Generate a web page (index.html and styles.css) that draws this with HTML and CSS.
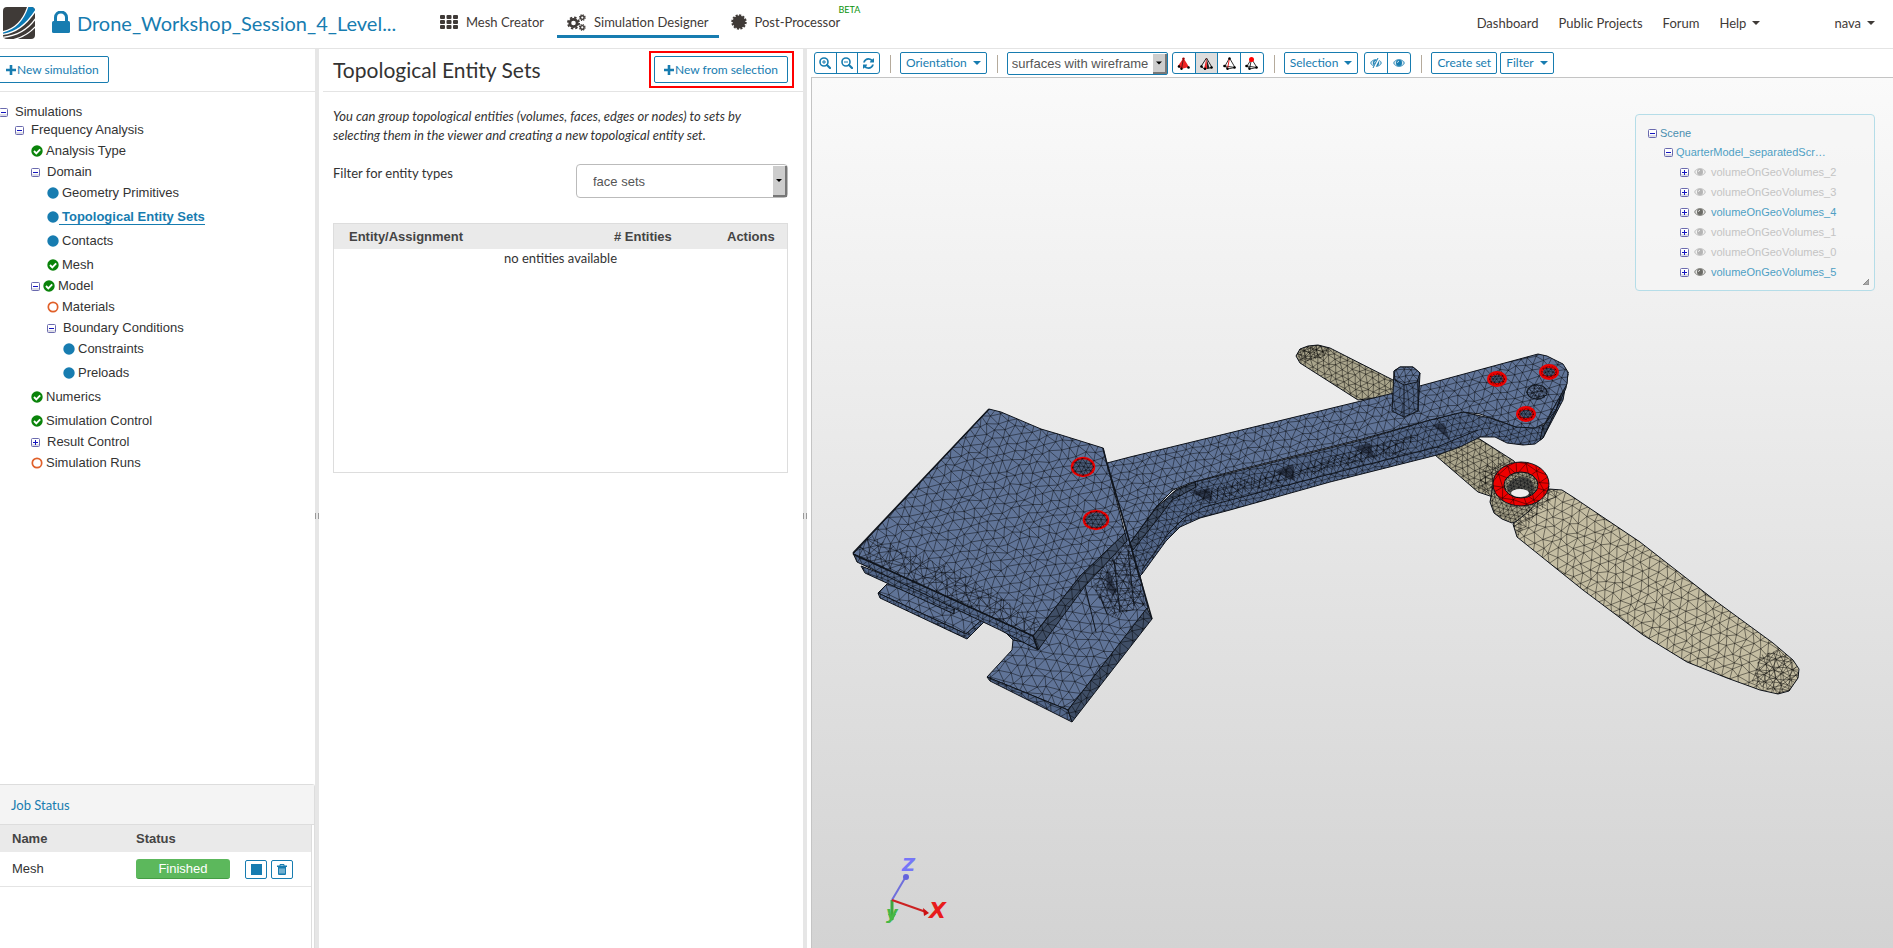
FILE: index.html
```html
<!DOCTYPE html>
<html lang="en">
<head>
<meta charset="utf-8">
<title>Simulation Designer</title>
<link rel="stylesheet" href="styles.css">
</head>
<body>
<svg class="sprite" aria-hidden="true">
  <symbol id="i-minus" viewBox="0 0 9 9"><rect x="0.5" y="0.5" width="8" height="8" rx="1" fill="#fff" stroke="#6a6aae"/><path d="M1 6h7v2H1z" fill="#dcdce6"/><path d="M2 4.500h5" stroke="#1515c0"/></symbol>
  <symbol id="i-plus" viewBox="0 0 9 9"><rect x="0.500" y="0.500" width="8" height="8" rx="1" fill="#fff" stroke="#6a6aae"/><path d="M1 6h7v2H1z" fill="#dcdce6"/><path d="M2 4.500h5M4.500 2v5" stroke="#1515c0"/></symbol>
  <symbol id="i-dot" viewBox="0 0 12 12"><circle cx="6" cy="6" r="5.700" fill="#177cb0"/></symbol>
  <symbol id="i-ok" viewBox="0 0 12 12"><circle cx="6" cy="6" r="5.700" fill="#0a830a"/><path d="M3 6l2.300 2.300L9.200 4.400" fill="none" stroke="#fff" stroke-width="1.900"/></symbol>
  <symbol id="i-open" viewBox="0 0 12 12"><circle cx="6" cy="6" r="4.700" fill="none" stroke="#e0602a" stroke-width="1.700"/></symbol>
  <symbol id="i-add" viewBox="0 0 10 10"><path d="M3.700 0h2.600v3.700H10v2.600H6.300V10H3.700V6.300H0V3.700h3.700z" fill="currentColor"/></symbol>
  <symbol id="i-caret" viewBox="0 0 8 4"><path d="M0 0h8L4 4z" fill="currentColor"/></symbol>
  <symbol id="i-eye" viewBox="0 0 12 8"><path d="M0 4Q2.500 0 6 0t6 4Q9.500 8 6 8T0 4z" fill="currentColor" opacity=".75"/><path d="M1.300 4Q2 2.300 3.500 1.500 2.300 4 3.500 6.500 2 5.700 1.300 4zM10.700 4Q10 2.300 8.500 1.500 9.700 4 8.500 6.500 10 5.700 10.700 4z" fill="#fff" opacity=".8"/><circle cx="6" cy="3.900" r="2.800" fill="currentColor"/><path d="M4.500 3.800Q4.600 2.300 6 2.200" fill="none" stroke="#fff" stroke-width=".8"/></symbol>
  <symbol id="i-zoomin" viewBox="0 0 12 12"><circle cx="5" cy="5" r="4" fill="none" stroke="currentColor" stroke-width="1.600"/><path d="M8 8l3 3" stroke="currentColor" stroke-width="2.200" stroke-linecap="round"/><path d="M3 5h4M5 3v4" stroke="currentColor"/></symbol>
  <symbol id="i-zoomout" viewBox="0 0 12 12"><circle cx="5" cy="5" r="4" fill="none" stroke="currentColor" stroke-width="1.600"/><path d="M8 8l3 3" stroke="currentColor" stroke-width="2.200" stroke-linecap="round"/><path d="M3 5h4" stroke="currentColor"/></symbol>
  <symbol id="i-refresh" viewBox="0 0 1536 1536"><path fill="currentColor" d="M1511 928q0 5-1 7-64 268-268 434.500t-478 166.500q-146 0-282.500-55t-243.500-157l-129 129q-19 19-45 19t-45-19-19-45v-448q0-26 19-45t45-19h448q26 0 45 19t19 45-19 45l-137 137q71 66 161 102t187 36q134 0 250-65t186-179q11-17 53-117 8-23 30-23h192q13 0 22.500 9.500t9.500 22.500zm25-800v448q0 26-19 45t-45 19h-448q-26 0-45-19t-19-45 19-45l138-138q-148-137-349-137-134 0-250 65t-186 179q-11 17-53 117-8 23-30 23h-199q-13 0-22.500-9.500t-9.500-22.500v-7q65-268 270-434.500t480-166.500q146 0 284 55.500t245 156.500l130-129q19-19 45-19t45 19 19 45z"/></symbol>
</svg>

<header class="topbar">
  <a class="logo" href="#" aria-label="Home">
    <svg width="32" height="32" viewBox="0 0 32 32"><defs><clipPath id="lg"><rect width="32" height="32" rx="4"/></clipPath></defs>
      <g clip-path="url(#lg)"><rect width="32" height="32" fill="#3f3a37"/>
      <path d="M0 25C13 22 20 13 25 0h7v5C25 15 15 25 0 27z" fill="#0a7ab5"/>
      <g fill="none" stroke="#fff"><path d="M-1 25C13 22 21 12 25-1" stroke-width="1.300"/><path d="M-1 27.500C14 26 24 17 33 3" stroke-width="1.300"/><path d="M-1 30.500C14 29 25 23 33 11" stroke-width="1.300"/><path d="M9 33C18 31 26 27 33 19" stroke-width="1.300"/></g></g></svg>
  </a>
  <a class="project" href="#">
    <svg width="18" height="22" viewBox="0 0 18 22"><path d="M3.500 11V6.500a5.500 5.500 0 0 1 11 0V11" fill="none" stroke="currentColor" stroke-width="3"/><rect y="10" width="18" height="12" rx="1.500" fill="currentColor"/></svg>
    <span>Drone_Workshop_Session_4_Level...</span>
  </a>
  <nav class="tabs" aria-label="Workbench">
    <a class="tab" href="#"><svg width="18" height="14" viewBox="0 0 18 14" fill="currentColor"><rect width="5" height="4" rx="1"/><rect x="6.500" width="5" height="4" rx="1"/><rect x="13" width="5" height="4" rx="1"/><rect y="5" width="5" height="4" rx="1"/><rect x="6.500" y="5" width="5" height="4" rx="1"/><rect x="13" y="5" width="5" height="4" rx="1"/><rect y="10" width="5" height="4" rx="1"/><rect x="6.500" y="10" width="5" height="4" rx="1"/><rect x="13" y="10" width="5" height="4" rx="1"/></svg>Mesh Creator</a>
    <a class="tab active" href="#"><svg width="19" height="17" viewBox="0 0 19 17" fill="none" stroke="currentColor"><circle cx="6.500" cy="9" r="3.700" stroke-width="2.800"/><circle cx="6.500" cy="9" r="5.600" stroke-width="1.800" stroke-dasharray="2.400 2"/><circle cx="15.300" cy="3.600" r="1.800" stroke-width="1.400"/><circle cx="15.300" cy="3.600" r="2.800" stroke-width="1.200" stroke-dasharray="1.200 1"/><circle cx="15.300" cy="13.400" r="1.800" stroke-width="1.400"/><circle cx="15.300" cy="13.400" r="2.800" stroke-width="1.200" stroke-dasharray="1.200 1"/></svg>Simulation Designer</a>
    <a class="tab" href="#"><svg width="16" height="16" viewBox="0 0 16 16"><circle cx="8" cy="8" r="6.400" fill="currentColor"/><circle cx="8" cy="8" r="6.700" fill="none" stroke="currentColor" stroke-width="2" stroke-dasharray="2.100 1.400"/></svg>Post-Processor<sup class="beta">BETA</sup></a>
  </nav>
  <nav class="links" aria-label="Site">
    <a href="#">Dashboard</a><a href="#">Public Projects</a><a href="#">Forum</a>
    <a href="#">Help<svg class="caret"><use href="#i-caret"/></svg></a>
    <a class="user" href="#">nava<svg class="caret"><use href="#i-caret"/></svg></a>
  </nav>
</header>

<main class="workbench">
  <aside class="side">
    <div class="panel-head"><button class="btn btn-first"><svg class="add"><use href="#i-add"/></svg>New simulation</button></div>
    <ul class="tree">
      <li><div class="node"><svg class="fold"><use href="#i-minus"/></svg>Simulations</div>
        <ul>
          <li><div class="node"><svg class="fold"><use href="#i-minus"/></svg>Frequency Analysis</div>
            <ul>
              <li><div class="leaf"><svg><use href="#i-ok"/></svg>Analysis Type</div></li>
              <li><div class="node"><svg class="fold"><use href="#i-minus"/></svg>Domain</div>
                <ul>
                  <li><div class="leaf"><svg><use href="#i-dot"/></svg>Geometry Primitives</div></li>
                  <li><div class="leaf"><svg><use href="#i-dot"/></svg><a class="current" href="#">Topological Entity Sets</a></div></li>
                  <li><div class="leaf"><svg><use href="#i-dot"/></svg>Contacts</div></li>
                  <li><div class="leaf"><svg><use href="#i-ok"/></svg>Mesh</div></li>
                </ul></li>
              <li><div class="node both"><svg class="fold"><use href="#i-minus"/></svg><svg><use href="#i-ok"/></svg>Model</div>
                <ul>
                  <li><div class="leaf"><svg><use href="#i-open"/></svg>Materials</div></li>
                  <li><div class="node"><svg class="fold"><use href="#i-minus"/></svg>Boundary Conditions</div>
                    <ul>
                      <li><div class="leaf"><svg><use href="#i-dot"/></svg>Constraints</div></li>
                      <li><div class="leaf"><svg><use href="#i-dot"/></svg>Preloads</div></li>
                    </ul></li>
                </ul></li>
              <li><div class="leaf"><svg><use href="#i-ok"/></svg>Numerics</div></li>
              <li><div class="leaf"><svg><use href="#i-ok"/></svg>Simulation Control</div></li>
              <li><div class="node"><svg class="fold"><use href="#i-plus"/></svg>Result Control</div></li>
              <li><div class="leaf"><svg><use href="#i-open"/></svg>Simulation Runs</div></li>
            </ul></li>
        </ul></li>
    </ul>
    <section class="jobs">
      <h2>Job Status</h2>
      <div class="jobs-body">
      <table>
        <thead><tr><th class="c-name">Name</th><th>Status</th><th class="c-act"></th></tr></thead>
        <tbody><tr><td>Mesh</td><td><span class="badge">Finished</span></td>
          <td><div class="acts"><button class="mini" aria-label="Stop"><svg width="11" height="11"><rect width="11" height="11" fill="#177cb0"/></svg></button><button class="mini" aria-label="Delete"><svg width="10" height="11" viewBox="0 0 10 11"><path d="M3 2V.5h4V2" fill="none" stroke="#177cb0"/><path d="M0 1.500h10V3H0zM1 3h8v7q0 1-1 1H2q-1 0-1-1z" fill="#177cb0"/><path d="M3 4.500v5M5 4.500v5M7 4.500v5" stroke="#cfe4ef"/></svg></button></div></td></tr></tbody>
      </table>
      </div>
    </section>
  </aside>
  <div class="splitter"><i></i></div>

  <section class="entity">
    <div class="panel-head entity-head"><h1>Topological Entity Sets</h1><div class="highlight"><button class="btn"><svg class="add"><use href="#i-add"/></svg>New from selection</button></div></div>
    <div class="entity-body">
      <p class="hint">You can group topological entities (volumes, faces, edges or nodes) to sets by selecting them in the viewer and creating a new topological entity set.</p>
      <div class="filter"><label for="etype">Filter for entity types</label>
        <span class="pick"><select id="etype"><option>face sets</option></select><svg class="caret"><use href="#i-caret"/></svg></span></div>
      <div class="table-box"><table>
        <thead><tr><th>Entity/Assignment</th><th class="c-num"># Entities</th><th class="c-do">Actions</th></tr></thead>
        <tbody><tr><td colspan="3">no entities available</td></tr></tbody>
      </table></div>
    </div>
  </section>
  <div class="splitter"><i></i></div>

  <section class="viewer">
    <div class="toolbar">
      <div class="group g-zoom"><button aria-label="Zoom in"><svg width="12" height="12"><use href="#i-zoomin"/></svg></button><button aria-label="Zoom out"><svg width="12" height="12"><use href="#i-zoomout"/></svg></button><button aria-label="Reset view"><svg width="11" height="11"><use href="#i-refresh"/></svg></button></div>
      <span class="sep"></span>
      <button class="tool">Orientation<svg class="caret"><use href="#i-caret"/></svg></button>
      <span class="sep"></span>
      <span class="pick pick-render"><select aria-label="Render mode"><option>surfaces with wireframe</option></select><svg class="caret"><use href="#i-caret"/></svg></span>
      <div class="group g-sel">
        <button aria-label="Pick volumes"><svg width="13" height="13" viewBox="0 0 13 13"><path d="M1 9L6.500 1 12 10 4 12z" fill="#e22"/><path d="M6.500 1l-2 11" stroke="#611"/><circle cx="2" cy="9.500" r="1.300"/><circle cx="11.500" cy="10.500" r="1.300"/><circle cx="4.500" cy="11.800" r="1.200"/><circle cx="6.500" cy="1.600" r="1.200" fill="#900"/></svg></button><button class="on" aria-label="Pick faces"><svg width="13" height="13" viewBox="0 0 13 13"><path d="M1 9.500L6.500 1 12 10.500 4.500 12z" fill="#eee" stroke="#222"/><path d="M6.500 1L7 12l2.500-1z" fill="#222"/><path d="M6.500 1l.5 11H4z" fill="#e22"/><circle cx="1.500" cy="9.500" r="1.300"/><circle cx="11.500" cy="10.500" r="1.300"/><circle cx="5" cy="11.800" r="1.200"/></svg></button><button aria-label="Pick edges"><svg width="13" height="13" viewBox="0 0 13 13"><path d="M2 9L6.500 1 12 10.500 4.500 12zM2 9l10 1.500" fill="#fff" stroke="#333"/><path d="M6.500 1l-2 11" stroke="#e22"/><circle cx="1.500" cy="9" r="1.300"/><circle cx="11.500" cy="10.500" r="1.300"/><circle cx="4.500" cy="11.800" r="1.200"/><circle cx="6.500" cy="1.500" r="1.200"/></svg></button><button aria-label="Pick nodes"><svg width="13" height="13" viewBox="0 0 13 13"><path d="M2 9L6.500 2 12 10.500 4.500 12zM2 9l10 1.500M6.500 2l-2 10" fill="#fff" stroke="#333"/><circle cx="1.500" cy="9" r="1.300"/><circle cx="11.500" cy="10.500" r="1.300"/><circle cx="4.500" cy="11.800" r="1.200"/><circle cx="6.500" cy="2.500" r="2.500" fill="#f00"/></svg></button>
      </div>
      <span class="sep"></span>
      <button class="tool">Selection<svg class="caret"><use href="#i-caret"/></svg></button>
      <div class="group g-eye"><button aria-label="Hide selection"><svg width="12" height="10" viewBox="0 -1 12 10"><use href="#i-eye" width="12" height="8"/><path d="M8.800-1L3.800 9" stroke="#fff" stroke-width="2.400"/><path d="M8-1L3 9" stroke="currentColor"/></svg></button><button aria-label="Show selection"><svg width="12" height="8"><use href="#i-eye"/></svg></button></div>
      <span class="sep"></span>
      <button class="tool">Create set</button>
      <button class="tool">Filter<svg class="caret"><use href="#i-caret"/></svg></button>
    </div>
    <div class="canvas">
      <svg class="model" viewBox="812 78 1081 870" role="img" aria-label="Meshed drone arm with propeller">
        <!-- far propeller blade -->
        <path class="face blade-far" data-mesh="7 27" d="M1296 356L1300 349 1308 346 1318 345 1330 348 1395 381 1400 395 1358 400 1300 363z"/>
        <path class="face dense" data-mesh="5 10" d="M1296 356L1300 349 1308 346 1318 345 1332 350 1322 358 1306 361z"/>
        <path class="face blade-far" data-mesh="7 33" d="M1435 455L1478 438 1514 461 1525 480 1493 497 1478 492z"/>
        <path class="face dense" data-mesh="7 20" d="M1484 466L1505 462 1494 496 1478 490z"/>
        <!-- near blade and hub -->
        <path class="face hub" data-mesh="5 15" d="M1493 486L1490 502 1494 513 1502 519 1512 523 1520 520 1545 500 1549 486z"/>
        <path class="face blade" data-mesh="10 -25" d="M1549 489L1562 490 1573 497 1640 542 1717 602 1773 643 1793 660 1799 669 1798 678 1789 691 1778 694 1760 690 1727 678 1687 662 1643 635 1583 590 1517 537 1513 524 1528 512z"/>
        <path class="face dense" data-mesh="7 30" d="M1549 489L1562 492 1545 506 1530 522 1517 537 1513 524 1528 512z"/>
        <path class="face dense" data-mesh="7 10" d="M1760 655L1780 650 1798 668 1798 678 1789 691 1778 694 1752 682z"/>
        <ellipse class="face red" data-mesh="12 20" cx="1521" cy="484" rx="28" ry="22"/>
        <ellipse class="face hub" data-mesh="4 20" cx="1521" cy="485" rx="17" ry="13"/>
        <path class="shade" d="M1507 489Q1509 478 1521 477T1535 490L1529 497 1513 497z"/>
        <ellipse cx="1520" cy="493" rx="9" ry="4" fill="#eee"/>
        <!-- lower plates -->
        <path class="face" data-mesh="11 20" d="M887 584L878 593 966 634 984 618 950 598z"/>
        <path class="face side" data-mesh="7 24" d="M878 593L966 634 984 618 984 622 967 639 880 598z"/>
        <path class="face" data-mesh="11 8" d="M1013 640L1012 650 987 677 1068 710 1148 608 1128 528 1033 600z"/>
        <path class="face dense" data-mesh="7 50" d="M1092 575L1130 535 1146 605 1112 618 1096 594z"/>
        <path class="edge" d="M1084 582L1096 632M1100 596L1107 614M1114 560L1120 612M1128 550L1134 606"/>
        <path class="shade" d="M1106 576L1110 572 1117 592 1113 595 1107 588z"/>
        <path class="face side" data-mesh="9 30" d="M987 677L1068 710 1072 722 990 681z"/>
        <path class="face dark" data-mesh="10 40" d="M1068 710L1147 608 1152 619 1110 673 1072 722z"/>
        <!-- arm side wall -->
        <path class="face side" data-mesh="7 -14" d="M1130 543L1156 508 1176 490 1195 482 1230 473 1362 440 1430 420 1463 412 1490 418 1516 427 1545 425 1565 385 1568 372 1563 400 1543 438 1535 444 1523 445 1507 443 1495 437 1480 437 1460 447 1437 455 1330 482 1230 510 1200 518 1180 527 1166 541 1142 574 1139 577z"/>
        <path class="face dense" data-mesh="8 35" d="M1195 492L1350 452 1420 433 1400 454 1330 470 1200 504z"/>
        <path class="shade" d="M1190 492L1213 502 1209 488zM1275 472L1295 481 1293 464zM1353 447L1375 459 1370 443zM1432 425L1450 440 1444 423z"/>
        <path class="face dark" data-mesh="8 40" d="M1130 543L1156 508 1176 490 1195 482 1196 487 1172 500 1160 516 1133 550z"/>
        <path class="face dark" data-mesh="9 60" d="M1568 374L1566 388 1543 438 1540 440 1543 426 1556 410z"/>
        <path class="edge" d="M1142 570L1168 534 1184 518 1204 507 1330 474 1437 447 1478 430"/>
        <!-- arm top -->
        <path class="face" data-mesh="9 -14" d="M1107 463L1130 457 1390 394 1538 354 1547 356 1563 364 1568 372 1567 384 1545 423 1535 428 1516 427 1497 420 1480 414 1463 412 1430 420 1362 439 1230 472 1190 483 1173 490 1156 507 1130 543z"/>
        <ellipse class="face dense" data-mesh="5 0" cx="1537" cy="392" rx="11" ry="8"/>
        <ellipse class="edge" cx="1537" cy="392" rx="10" ry="7"/>
        <path class="face side" data-mesh="8 80" d="M1394 371L1400 367 1413 367 1420 373 1418 411 1404 417 1392 411z"/>
        <path class="face" data-mesh="7 0" d="M1394 371L1400 367 1413 367 1420 373 1417 382 1404 385 1395 380z"/>
        <path class="edge" d="M1404 385v31M1418 380v32"/>
        <g class="bolt"><ellipse data-mesh="4 0" cx="1497" cy="379" rx="8" ry="6"/><ellipse data-mesh="4 0" cx="1549" cy="372" rx="8" ry="6"/><ellipse data-mesh="4 0" cx="1526" cy="414" rx="8" ry="6"/></g>
        <!-- battery plate -->
        <path class="face side" data-mesh="7 24" d="M861 566L955 602 954 614 865 573z"/>
        <path class="face side" data-mesh="6 24" d="M1001 628L1013 640 1028 643 1038 649 1033 636z"/>
        <path class="face dark" data-mesh="11 -48" d="M1125 533L1127 541 1085 586 1038 650 1033 636 1080 576z"/>
        <path class="face side" data-mesh="7 24" d="M853 553L1033 636 1038 650 1000 630 857 562z"/>
        <path class="face" data-mesh="10 -12" d="M989 409L1001 412 1041 429 1058 434 1103 448 1106 460 1125 533 1080 576 1033 636 853 554z"/>
        <path class="face dense" data-mesh="12 24" d="M853 554L870 536 960 572 1040 622 1033 636z"/>
        <path class="edge bold" d="M853 554L1033 636 1038 650M1103 448L1106 460 1152 619M989 409L853 553"/>
        <g class="bolt bolt-lg"><ellipse data-mesh="5 0" cx="1083" cy="467" rx="11" ry="9"/><ellipse data-mesh="5 0" cx="1096" cy="520" rx="12" ry="9"/></g>
        <!-- orientation axes -->
        <g stroke-width="2"><path d="M892 900l13-22" stroke="#6f6fdc"/><circle cx="906" cy="877" r="3" fill="#6464dc"/><path d="M892 900v20" stroke="#3fa83f" stroke-width="3"/><path d="M888 914h8l-4 7z" fill="#3fa83f"/><path d="M892 900l34 12" stroke="#c22"/><path d="M923 908l6 5-5 3z" fill="#c11"/></g>
        <text class="axis" x="902" y="871" fill="#7676f8">Z</text><text class="axis big" x="929" y="918" fill="#e81c1c">X</text><text class="axis" x="886" y="919" fill="#46b846">y</text>
      </svg>
      <div class="scene">
        <ul>
          <li><div class="s-row"><svg class="fold"><use href="#i-minus"/></svg><a class="root" href="#">Scene</a></div>
            <ul>
              <li><div class="s-row"><svg class="fold"><use href="#i-minus"/></svg><a href="#">QuarterModel_separatedScr…</a></div>
                <ul class="vols">
                  <li class="off"><svg class="fold"><use href="#i-plus"/></svg><svg class="eye"><use href="#i-eye"/></svg><a href="#">volumeOnGeoVolumes_2</a></li>
                  <li class="off"><svg class="fold"><use href="#i-plus"/></svg><svg class="eye"><use href="#i-eye"/></svg><a href="#">volumeOnGeoVolumes_3</a></li>
                  <li><svg class="fold"><use href="#i-plus"/></svg><svg class="eye"><use href="#i-eye"/></svg><a href="#">volumeOnGeoVolumes_4</a></li>
                  <li class="off"><svg class="fold"><use href="#i-plus"/></svg><svg class="eye"><use href="#i-eye"/></svg><a href="#">volumeOnGeoVolumes_1</a></li>
                  <li class="off"><svg class="fold"><use href="#i-plus"/></svg><svg class="eye"><use href="#i-eye"/></svg><a href="#">volumeOnGeoVolumes_0</a></li>
                  <li><svg class="fold"><use href="#i-plus"/></svg><svg class="eye"><use href="#i-eye"/></svg><a href="#">volumeOnGeoVolumes_5</a></li>
                </ul></li>
            </ul></li>
        </ul>
        <svg class="grip" width="6" height="6" viewBox="0 0 6 6"><path d="M6 0v6H0z" fill="#aaa" stroke="#888"/></svg>
      </div>
    </div>
  </section>
</main>
<script src="mesh.js"></script>
</body>
</html>
```
FILE: styles.css
```css
* { box-sizing: border-box; }
body { margin: 0; height: 100vh; display: flex; flex-direction: column; background: #fff; color: #333; font: 13px/20px Lato, sans-serif; overflow: hidden; }
a { color: inherit; text-decoration: none; }
ul { list-style: none; margin: 0; padding: 0; }
button, select { font: inherit; color: inherit; margin: 0; }
button { cursor: pointer; }
svg { flex: none; }
.sprite { display: none; }
.caret { width: 8px; height: 4px; margin-left: 6px; }

/* top bar */
.topbar { flex: none; height: 49px; border-bottom: 1px solid #e4e4e4; display: flex; align-items: flex-start; }
.logo { margin: 7px 17px 0 3px; height: 32px; }
.project { display: flex; gap: 7px; align-items: flex-start; width: 380px; padding-top: 11px; color: #177cb0; font-size: 20px; line-height: 24px; white-space: nowrap; }
.tabs { display: flex; }
.tab { position: relative; display: flex; align-items: center; gap: 8px; height: 38px; padding: 9px 10px 0 8px; border-bottom: 3px solid transparent; color: #3f3a37; white-space: nowrap; }
.tab.active { border-color: #177cb0; margin: 0 4px 0 3px; padding-left: 10px; }
.beta { position: absolute; right: -10px; top: 3px; font-size: 9px; line-height: 14px; color: #0b930b; }
.links { display: flex; gap: 20px; margin-left: auto; padding: 13px 18px 0 0; color: #3f3a37; }
.links a { display: flex; align-items: center; white-space: nowrap; }
.user { margin-left: 54px; }

/* columns */
.workbench { flex: 1; min-height: 0; display: flex; }
.side { width: 315px; flex: none; display: flex; flex-direction: column; }
.splitter { flex: none; width: 4px; padding-top: 34px; background: #e6e6e6; display: flex; align-items: center; }
.splitter i { width: 4px; height: 6px; border: solid #999; border-width: 0 1px; }
.panel-head { flex: none; height: 43px; padding-bottom: 1px; border-bottom: 1px solid #e4e4e4; display: flex; align-items: center; }
.btn { display: flex; align-items: center; gap: 1px; height: 27px; padding: 0 9px; border: 1px solid #177cb0; border-radius: 2px; background: #fff; color: #177cb0; font-size: 12px; white-space: nowrap; }
.btn-first { margin: 0 0 0 -1px; padding-left: 6px; border-radius: 0 2px 2px 0; }
.add { width: 10px; height: 10px; }

/* simulation tree */
.tree { flex: 1; padding-top: 11px; margin-left: -1px; font: 13px/18px "Liberation Sans", sans-serif; }
.tree ul { padding-left: 16px; }
.tree .node, .tree .leaf { display: flex; align-items: center; gap: 7px; white-space: nowrap; }
.tree .node { height: 18px; }
.tree .leaf { height: 24px; gap: 3px; }
.tree .both { gap: 3px; }
.tree svg { width: 12px; height: 12px; }
.tree svg.fold, .fold { width: 9px; height: 9px; }
.current { font-weight: bold; color: #177cb0; border-bottom: 1px solid #177cb0; line-height: 14px; margin-left: -3px; padding-left: 3px; }

/* jobs */
.jobs { flex: none; height: 164px; display: flex; flex-direction: column; border: 1px solid #ddd; border-width: 1px 1px 0 0; border-radius: 0 3px 0 0; background: #fff; }
.jobs h2 { margin: 0; height: 40px; padding: 0 11px; background: #f4f4f4; border-bottom: 1px solid #ddd; font: 13px/40px Lato, sans-serif; color: #177cb0; }
.jobs-body { flex: 1; margin-right: 2px; border-right: 1px solid #ddd; }
table { width: 100%; border-collapse: collapse; font: 13px/16px "Liberation Sans", sans-serif; }
th { text-align: left; color: #444; background: #eaeaea; }
.jobs th { height: 27px; padding: 0; }
.jobs td { height: 34px; padding: 1px 0 0; border-bottom: 1px solid #e4e4e4; }
.jobs th:first-child, .jobs td:first-child { padding-left: 12px; }
.c-name { width: 136px; }
.c-act { width: 66px; }
.badge { display: block; width: 94px; height: 20px; border-radius: 3px; border-bottom: 1px solid #449d44; background: #5cb85c; color: #fff; text-align: center; line-height: 19px; }
.acts { display: flex; gap: 4px; }
.mini { width: 22px; height: 19px; padding: 0; display: flex; align-items: center; justify-content: center; border: 1px solid #177cb0; border-radius: 2px; background: #fff; }

/* entity panel */
.entity { width: 484px; flex: none; padding-left: 4px; }
.entity-head { padding: 0 9px 1px 10px; justify-content: space-between; }
h1 { margin: 0; font-size: 21px; line-height: 26px; font-weight: normal; white-space: nowrap; }
.highlight { border: 2px solid #f00; padding: 3px 4px 3px 3px; }
.entity-body { padding: 15px 15px 0 10px; }
.hint { margin: 0; padding-right: 30px; font-style: italic; line-height: 19px; }
.filter { margin-top: 19px; line-height: 18px; display: flex; justify-content: space-between; align-items: flex-start; }
.pick { position: relative; display: block; width: 212px; }
.pick select { appearance: none; display: block; width: 100%; height: 34px; padding: 0 16px; border: 1px solid #bbb; border-radius: 4px; background: #fff; color: #555; font: 13px "Liberation Sans", sans-serif; }
.pick .caret { position: absolute; right: 1px; top: 2px; width: 14px; height: 31px; padding: 12px 3px; margin: 0; background: #cdcdcd; border: solid #777; border-width: 0 2px 2px 0; color: #000; }
.table-box { margin-top: 25px; height: 250px; border: 1px solid #ddd; }
.table-box th { height: 25px; padding: 0 12px 0 15px; color: #444; }
.table-box th.c-num { width: 113px; padding: 0; }
.table-box th.c-do { width: 60px; padding: 0; }
.table-box td { padding: 0; text-align: center; font: 13px/18px Lato, sans-serif; }

/* viewer */
.viewer { flex: 1; min-width: 0; display: flex; flex-direction: column; padding-left: 4px; }
.toolbar { flex: none; height: 28px; padding: 3px 0 0 3px; display: flex; align-items: flex-start; color: #177cb0; font-size: 12px; white-space: nowrap; }
.group { display: flex; height: 22px; border: 1px solid #177cb0; border-radius: 3px; }
.group button { flex: 1; display: flex; align-items: center; justify-content: center; padding: 0; border: 0; background: none; color: #177cb0; }
.group button + button { border-left: 1px solid #177cb0; }
.group .on { background: #ddd; }
.g-zoom { width: 66px; }
.g-sel { width: 92px; margin-left: 4px; }
.g-eye { width: 47px; margin-left: 6px; }
.sep { width: 1px; height: 18px; margin: 3px 9px 0 10px; background: #b5ab9c; }
.tool { height: 22px; padding: 0 5px; display: flex; align-items: center; border: 1px solid #177cb0; border-radius: 2px; background: #fff; color: #177cb0; white-space: nowrap; }
.tool + .tool { margin-left: 3px; }
.pick-render { width: 161px; }
.pick-render select { height: 23px; padding: 0 4px; border-color: #177cb0; border-radius: 2px; }
.pick-render .caret { height: 20px; padding: 6px 3px; }
.canvas { position: relative; flex: 1; min-height: 0; border: solid #c4c4c4; border-width: 1px 0 0 1px; background: linear-gradient(#fafafa, #d3d3d3); }
.model { display: block; width: 100%; height: 100%; }
.face { fill: #607498; stroke: #10151d; stroke-width: 1; }
.face.side { fill: #53678a; }
.face.dark { fill: #3f4e66; }
.face.dense { fill: none; stroke: none; }
.face.blade { fill: #c4bda2; }
.face.blade-far { fill: #aaa58c; }
.face.hub { fill: #a7a28a; }
.face.red { fill: #ee0000; }
.wires { fill: none; stroke: #000; stroke-width: .8; opacity: .56; }
.edge { fill: none; stroke: #10151d; stroke-width: 1; }
.edge.bold { stroke-width: 1.5; }
.shade { fill: #0c1119; opacity: .55; }
.bolt ellipse { fill: #4a5b78; stroke: #ee0000; stroke-width: 4; }
.bolt-lg ellipse { stroke-width: 2.5; }
.axis { font: italic bold 18px "DejaVu Sans", sans-serif; }
.axis.big { font-size: 22px; }

.scene { position: absolute; top: 36px; right: 18px; width: 240px; height: 177px; padding: 9px 12px; border: 1px solid #b5dde8; border-radius: 4px; background: rgba(245, 245, 245, .7); font: 11px/19px "Liberation Sans", sans-serif; color: #4f9fc4; }
.scene ul ul { padding-left: 16px; }
.s-row, .vols li { display: flex; align-items: center; height: 19px; gap: 3px; white-space: nowrap; }
.vols li { height: 20px; gap: 5px; }
.root { color: #4a8fb0; }
.eye { width: 12px; height: 8px; color: #6b6b66; }
.off { color: #c4c4c4; }
.off .eye { color: #b5b5b5; }
.grip { position: absolute; right: 5px; bottom: 5px; }
```
FILE: mesh.js
```js
// Draws a triangulated wireframe over every face that declares data-mesh="size angle".
(function () {
  var ns = 'http://www.w3.org/2000/svg';
  var seed = 7;
  function rnd() { seed = (seed * 16807) % 2147483647; return seed / 2147483647 - 0.5; }
  document.querySelectorAll('[data-mesh]').forEach(function (face, n) {
    var spec = face.dataset.mesh.split(' ').map(Number);
    var s = spec[0], a = spec[1] * Math.PI / 180, box = face.getBBox();
    var cx = box.x + box.width / 2, cy = box.y + box.height / 2;
    var half = Math.ceil(Math.hypot(box.width, box.height) / 2 / s) + 1;
    var rows = Math.ceil(half / 0.8), pts = {}, d = '';
    for (var j = -rows; j <= rows; j++) {
      for (var i = -half; i <= half; i++) {
        var u = (i + (j & 1 ? 0.5 : 0)) * s + rnd() * s * 0.4;
        var v = j * s * 0.8 + rnd() * s * 0.4;
        pts[i + ',' + j] = (cx + u * Math.cos(a) - v * Math.sin(a)).toFixed(1) + ' ' + (cy + u * Math.sin(a) + v * Math.cos(a)).toFixed(1);
      }
    }
    function line(p, q) { if (pts[p] && pts[q]) d += 'M' + pts[p] + 'L' + pts[q]; }
    for (j = -rows; j <= rows; j++) {
      for (i = -half; i <= half; i++) {
        var k = i + ',' + j, o = j & 1 ? 1 : 0;
        line(k, (i + 1) + ',' + j);
        line(k, (i + o) + ',' + (j + 1));
        line(k, (i + o - 1) + ',' + (j + 1));
      }
    }
    var clip = document.createElementNS(ns, 'clipPath');
    clip.id = 'face' + n;
    var copy = face.cloneNode(false);
    copy.removeAttribute('class');
    copy.removeAttribute('data-mesh');
    clip.appendChild(copy);
    var wires = document.createElementNS(ns, 'path');
    wires.setAttribute('class', 'wires');
    wires.setAttribute('d', d);
    wires.setAttribute('clip-path', 'url(#face' + n + ')');
    face.after(clip, wires);
  });
})();
```
